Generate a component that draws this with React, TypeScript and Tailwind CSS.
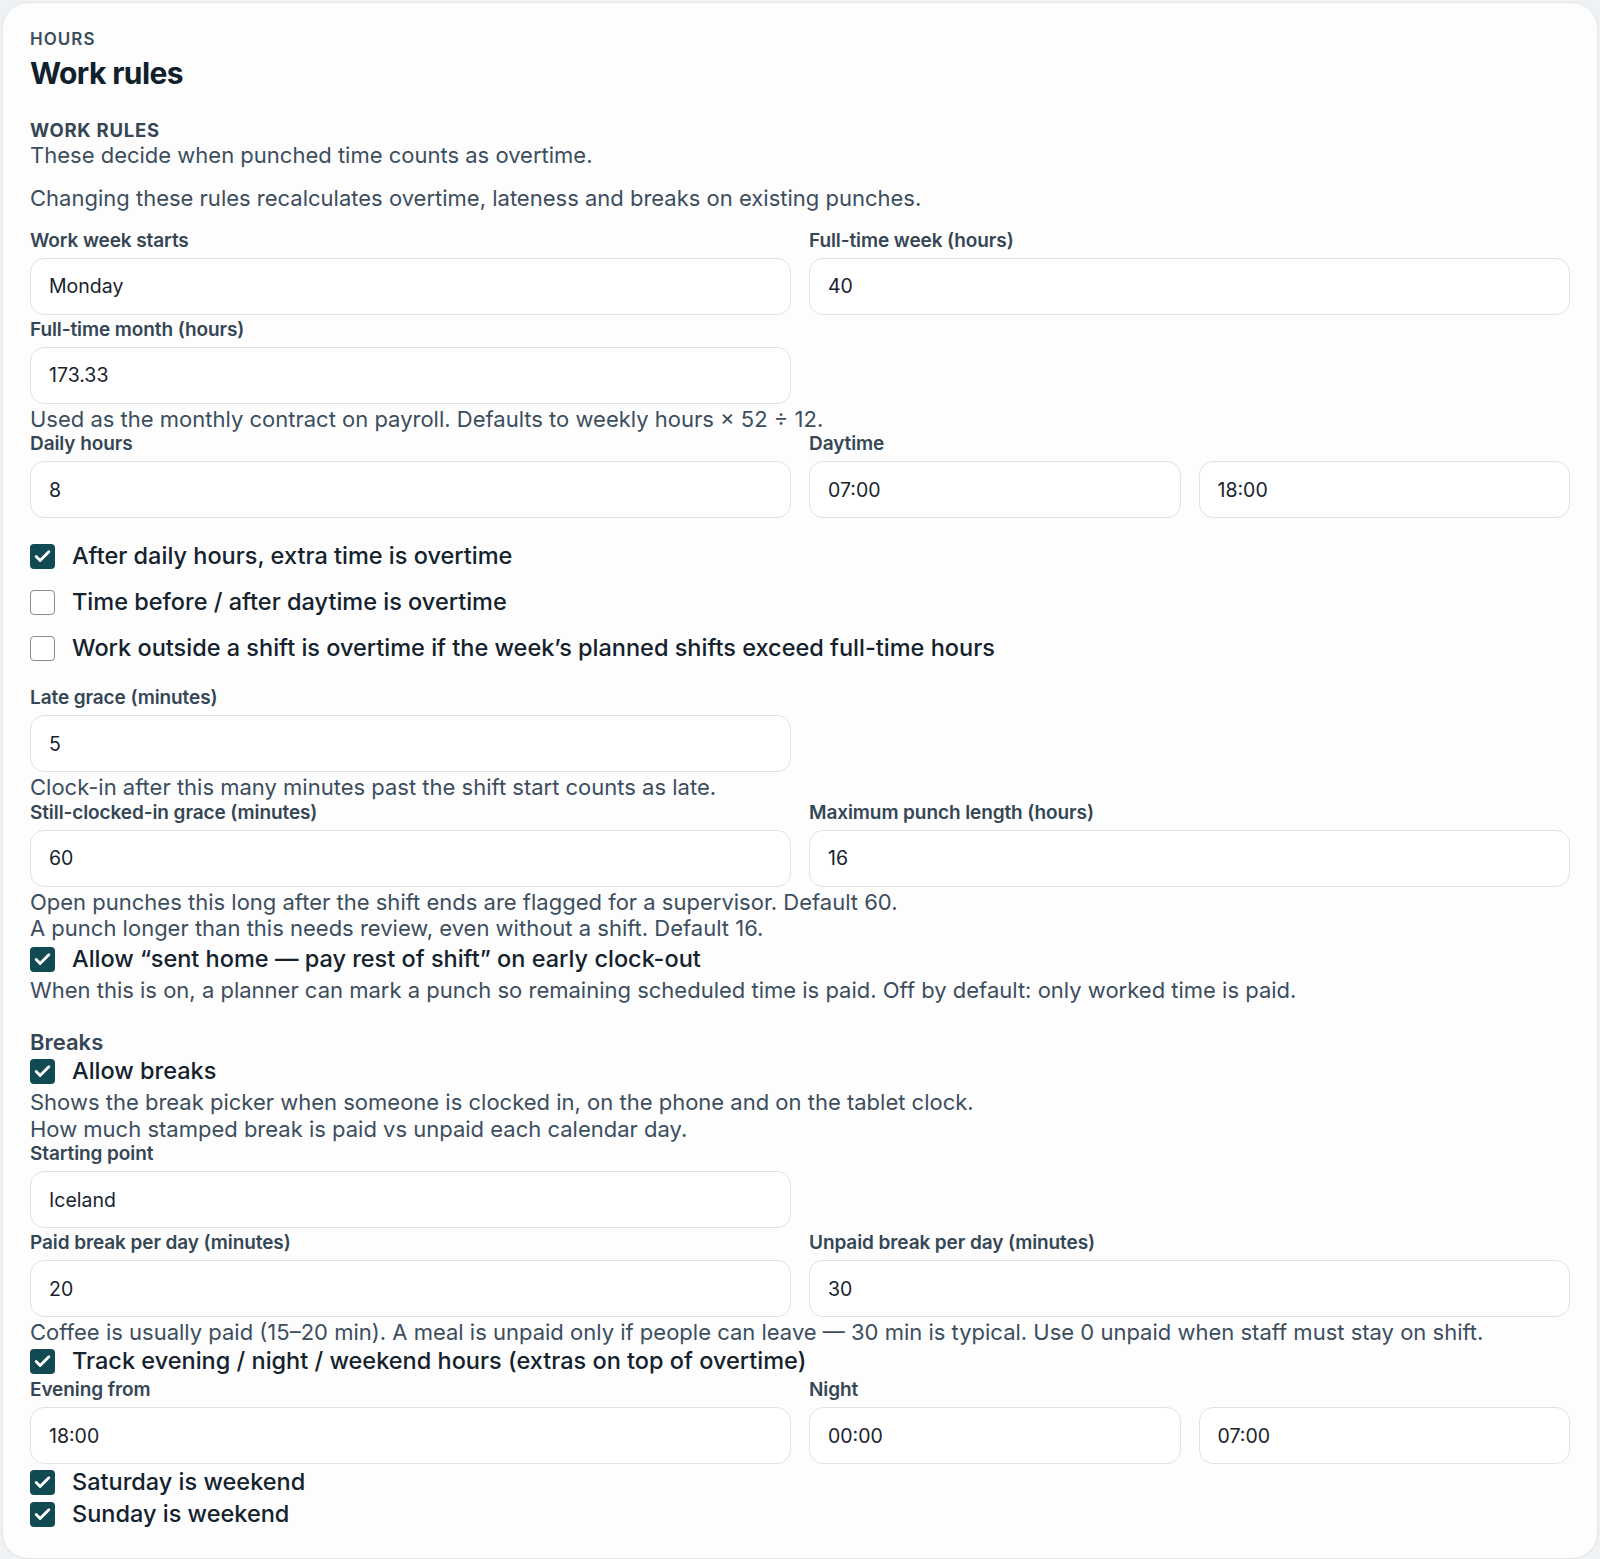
import { Check } from 'lucide-react';

type FieldProps = { label: string; value: string };

function Box({ value }: { value: string }) {
  return (
    <input
      readOnly
      value={value}
      className="mt-[5px] block h-[57px] w-full rounded-[14px] border border-[#dfe3e7] bg-white px-[18px] text-[19.5px] text-[#17232d] outline-none"
    />
  );
}

function Label({ children }: { children: React.ReactNode }) {
  return <div className="text-[19px] font-semibold leading-6 tracking-[-0.005em] text-[#354655]">{children}</div>;
}

function Field({ label, value }: FieldProps) {
  return (
    <div>
      <Label>{label}</Label>
      <Box value={value} />
    </div>
  );
}

function CheckRow({ label, checked, className = '' }: { label: string; checked?: boolean; className?: string }) {
  return (
    <label className={`flex h-8 items-center gap-[17px] ${className}`}>
      {checked ? (
        <span className="flex h-[25px] w-[25px] shrink-0 items-center justify-center rounded-[4px] bg-[#124a53]">
          <Check className="h-[19px] w-[19px] text-white" strokeWidth={3.6} />
        </span>
      ) : (
        <span className="h-[25px] w-[25px] shrink-0 rounded-[4px] border-[1.5px] border-[#868d94] bg-white" />
      )}
      <span className="text-[23.5px] font-medium leading-8 text-[#14222d]">{label}</span>
    </label>
  );
}

function Help({ children, className = '' }: { children: React.ReactNode; className?: string }) {
  return <p className={`text-[22px] leading-[26.4px] text-[#3c4e5d] ${className}`}>{children}</p>;
}

export default function App() {
  return (
    <div className="min-h-screen bg-[#eef2f5] p-[2px] [font-family:Inter,sans-serif]">
      <div className="rounded-[26px] border border-[#e2e6e9] bg-[#fdfdfd] px-[27px] pb-[28px] pt-[24px]">
        {/* Header */}
        <div className="text-[17px] font-semibold uppercase leading-6 tracking-[0.06em] text-[#3b4c5a]">Hours</div>
        <h1 className="mt-[4px] text-[30px] font-bold leading-9 tracking-[-0.02em] text-[#10212c]">Work rules</h1>

        <div className="mt-[27px] text-[18.5px] font-bold uppercase leading-6 tracking-[0.04em] text-[#354655]">Work rules</div>
        <Help>These decide when punched time counts as overtime.</Help>
        <Help className="mt-[17px]">Changing these rules recalculates overtime, lateness and breaks on existing punches.</Help>

        {/* Week / month */}
        <div className="mt-[17px] grid grid-cols-2 gap-x-[18px] gap-y-[3px]">
          <Field label="Work week starts" value="Monday" />
          <Field label="Full-time week (hours)" value="40" />
          <Field label="Full-time month (hours)" value="173.33" />
        </div>
        <Help className="mt-[2px]">Used as the monthly contract on payroll. Defaults to weekly hours × 52 ÷ 12.</Help>

        <div className="grid grid-cols-2 gap-x-[18px]">
          <Field label="Daily hours" value="8" />
          <div>
            <Label>Daytime</Label>
            <div className="grid grid-cols-2 gap-x-[18px]">
              <Box value="07:00" />
              <Box value="18:00" />
            </div>
          </div>
        </div>

        <div className="mt-[22px] flex flex-col gap-[14px]">
          <CheckRow checked label="After daily hours, extra time is overtime" />
          <CheckRow label="Time before / after daytime is overtime" />
          <CheckRow label="Work outside a shift is overtime if the week’s planned shifts exceed full-time hours" />
        </div>

        {/* Lateness and open punches */}
        <div className="mt-[22px] grid grid-cols-2 gap-x-[18px]">
          <Field label="Late grace (minutes)" value="5" />
        </div>
        <Help className="mt-[2px]">Clock-in after this many minutes past the shift start counts as late.</Help>

        <div className="grid grid-cols-2 gap-x-[18px]">
          <Field label="Still-clocked-in grace (minutes)" value="60" />
          <Field label="Maximum punch length (hours)" value="16" />
        </div>
        <Help className="mt-[2px]">Open punches this long after the shift ends are flagged for a supervisor. Default 60.</Help>
        <Help>A punch longer than this needs review, even without a shift. Default 16.</Help>

        <CheckRow checked className="mt-[2px]" label="Allow “sent home — pay rest of shift” on early clock-out" />
        <Help className="mt-[2px]">
          When this is on, a planner can mark a punch so remaining scheduled time is paid. Off by default: only worked time is paid.
        </Help>

        {/* Breaks */}
        <div className="mt-[25px] text-[22px] font-semibold leading-[26.4px] text-[#354655]">Breaks</div>
        <CheckRow checked label="Allow breaks" />
        <Help className="mt-[2px]">Shows the break picker when someone is clocked in, on the phone and on the tablet clock.</Help>
        <Help>How much stamped break is paid vs unpaid each calendar day.</Help>

        <div className="grid grid-cols-2 gap-x-[18px] gap-y-[3px]">
          <Field label="Starting point" value="Iceland" />
          <div />
          <Field label="Paid break per day (minutes)" value="20" />
          <Field label="Unpaid break per day (minutes)" value="30" />
        </div>
        <Help className="mt-[2px]">
          Coffee is usually paid (15–20 min). A meal is unpaid only if people can leave — 30 min is typical. Use 0 unpaid when staff must stay on shift.
        </Help>

        {/* Evening / night / weekend */}
        <CheckRow checked label="Track evening / night / weekend hours (extras on top of overtime)" />
        <div className="mt-px grid grid-cols-2 gap-x-[18px]">
          <Field label="Evening from" value="18:00" />
          <div>
            <Label>Night</Label>
            <div className="grid grid-cols-2 gap-x-[18px]">
              <Box value="00:00" />
              <Box value="07:00" />
            </div>
          </div>
        </div>
        <div className="mt-[2px]">
          <CheckRow checked label="Saturday is weekend" />
          <CheckRow checked label="Sunday is weekend" />
        </div>
      </div>
    </div>
  );
}
